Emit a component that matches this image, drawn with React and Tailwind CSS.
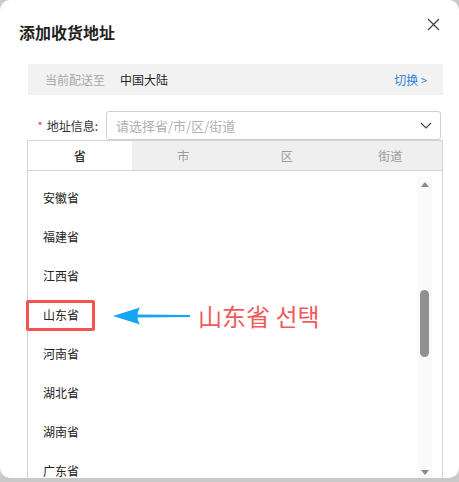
import React from 'react';

const provinces = ['安徽省', '福建省', '江西省', '山东省', '河南省', '湖北省', '湖南省', '广东省'];
const tabs = ['省', '市', '区', '街道'];

const font = { fontFamily: '"Noto Sans CJK SC", "Noto Sans", sans-serif' };

const App = () => {
    return (
        <div className="w-[459px] h-[482px] bg-[#c9c9c9] overflow-hidden" style={font}>
            <div className="relative h-[478px] bg-white rounded-[10px] overflow-hidden flex flex-col">
                {/* header */}
                <div className="pt-[20px] pl-[19px] h-[44px]">
                    <h1 className="text-[16px] leading-[24px] font-bold text-[#1f1f1f]">添加收货地址</h1>
                </div>
                <button className="absolute top-[17px] right-[19px] w-[14px] h-[14px] flex items-center justify-center">
                    <svg width="13" height="13" viewBox="0 0 13 13" fill="none" stroke="#444" strokeWidth="1.3">
                        <path d="M1 1L12 12M12 1L1 12" />
                    </svg>
                </button>

                {/* current region */}
                <div className="mt-[20px] ml-[28px] w-[415px] h-[31px] bg-[#f2f2f2] flex items-center pl-[17px] pr-[16px] text-[12px]">
                    <span className="text-[#a8a8a8]">当前配送至</span>
                    <span className="ml-[15px] text-[#222]">中国大陆</span>
                    <span className="ml-auto text-[#2f80d8]">切换 <span className="text-[11px]">&gt;</span></span>
                </div>

                {/* address row */}
                <div className="mt-[16px] flex items-center h-[29px]">
                    <div className="w-[106px] flex items-center justify-end pr-[8px] text-[12px] text-[#333]">
                        <span className="text-[#e4393c] mr-[4px] text-[11px]">*</span>
                        <span>地址信息:</span>
                    </div>
                    <div className="w-[335px] h-[29px] border border-[#cfcfcf] rounded-[3px] flex items-center pl-[9px] pr-[8px]">
                        <span className="text-[13px] text-[#b0b0b0]">请选择省/市/区/街道</span>
                        <svg className="ml-auto" width="12" height="7" viewBox="0 0 12 7" fill="none" stroke="#444" strokeWidth="1.2">
                            <path d="M1 1L6 6L11 1" />
                        </svg>
                    </div>
                </div>

                {/* picker panel */}
                <div className="ml-[27px] w-[416px] flex-1 border-x border-t border-[#d4d4d4] flex flex-col overflow-hidden">
                    <div className="flex h-[30px] border-b border-[#d4d4d4]">
                        {tabs.map((t, i) => (
                            <div
                                key={t}
                                className={
                                    i === 0
                                        ? 'flex-1 flex items-center justify-center bg-white text-[12px] text-[#222] font-medium'
                                        : 'flex-1 flex items-center justify-center bg-[#efefef] text-[12px] text-[#9a9a9a]'
                                }
                            >
                                {t}
                            </div>
                        ))}
                    </div>
                    <div className="flex flex-1 overflow-hidden">
                        <ul className="flex-1 pt-[7px]">
                            {provinces.map(p => (
                                <li key={p} className="h-[39px] flex items-center pl-[15px] text-[12px] text-[#222]">
                                    {p}
                                </li>
                            ))}
                        </ul>
                        {/* scrollbar */}
                        <div className="w-[15px] mr-[10px] mt-[5px] bg-[#fafafa] flex flex-col items-center">
                            <div className="mt-[6px] w-0 h-0 border-x-[4px] border-x-transparent border-b-[5px] border-b-[#8c8c8c]" />
                            <div className="mt-[103px] w-[9px] h-[67px] rounded-full bg-[#909090]" />
                            <div className="mt-auto mb-[3px] w-0 h-0 border-x-[4px] border-x-transparent border-t-[5px] border-t-[#8c8c8c]" />
                        </div>
                    </div>
                </div>

                {/* annotation */}
                <div className="absolute left-[26px] top-[300px] w-[69px] h-[31px] border-[3px] rounded-[2px] border-[#f55252]" />
                <svg className="absolute left-[111px] top-[305px]" width="82" height="22" viewBox="0 0 82 22">
                    <path d="M2 11L29 2.5C27 6 26.5 8 26.5 9.5L79 10L79 12L26.5 12.5C26.5 14 27 16 29 19.5Z" fill="#14a6f2" />
                </svg>
                <div className="absolute left-[198px] top-[299px] text-[24px] leading-[34px] text-[#f25a5a]" style={{ fontFamily: '"Noto Sans CJK KR", "Noto Sans CJK SC", sans-serif' }}>
                    山东省 선택
                </div>
            </div>
        </div>
    );
};

export default App;
